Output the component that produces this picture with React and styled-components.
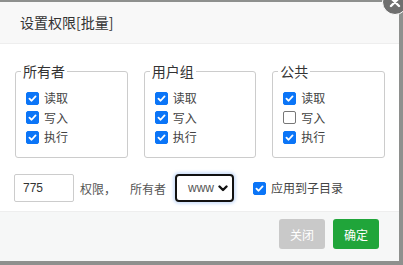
import React from 'react'
import styled, { createGlobalStyle } from 'styled-components'

const GlobalStyle = createGlobalStyle`
  html, body {
    margin: 0;
    padding: 0;
    background: #8e908e;
    font-family: "Noto Sans CJK SC", "Noto Sans", sans-serif;
    color: #333;
  }
`

const groups = [
  { title: '所有者', read: true, write: true, exec: true },
  { title: '用户组', read: true, write: true, exec: true },
  { title: '公共', read: true, write: false, exec: true },
]

const Check = ({ checked, children }) => (
  <CheckLabel>
    <Box $checked={checked}>
      {checked && (
        <svg width="9" height="9" viewBox="0 0 10 10">
          <path d="M1.6 5.2 L4 7.5 L8.4 2.6" fill="none" stroke="#fff" strokeWidth="2" strokeLinecap="round" strokeLinejoin="round" />
        </svg>
      )}
    </Box>
    {children}
  </CheckLabel>
)

const App = () => {
  return (
    <>
      <GlobalStyle />
      <Layer>
        <Header>设置权限[批量]</Header>
        <Body>
          <Groups>
            {groups.map((g) => (
              <Group key={g.title}>
                <Legend>{g.title}</Legend>
                <Check checked={g.read}>读取</Check>
                <Check checked={g.write}>写入</Check>
                <Check checked={g.exec}>执行</Check>
              </Group>
            ))}
          </Groups>
          <Row>
            <Input defaultValue="775" />
            <Text>权限，</Text>
            <Text $gap>所有者</Text>
            <Select>
              <span>www</span>
              <svg width="10" height="7" viewBox="0 0 10 7">
                <path d="M1.5 1.5 L5 5 L8.5 1.5" fill="none" stroke="#111" strokeWidth="2.4" strokeLinecap="round" strokeLinejoin="round" />
              </svg>
            </Select>
            <Check checked>应用到子目录</Check>
          </Row>
        </Body>
        <Footer>
          <Button $kind="close">关闭</Button>
          <Button $kind="ok">确定</Button>
        </Footer>
        <CloseIcon>
          <svg width="12" height="12" viewBox="0 0 12 12">
            <path d="M2 2 L10 10 M10 2 L2 10" stroke="#fff" strokeWidth="2.4" strokeLinecap="round" />
          </svg>
        </CloseIcon>
      </Layer>
    </>
  )
}

const Layer = styled.div`
  position: relative;
  margin-top: 2px;
  width: 399px;
  height: 259px;
  background: #fff;
  display: flex;
  flex-direction: column;
`

const Header = styled.div`
  height: 41px;
  line-height: 41px;
  padding-left: 20px;
  font-size: 14px;
  color: #333;
  background: #f8f8f8;
  border-bottom: 1px solid #eee;
`

const Body = styled.div`
  padding: 20px 14px 0 14px;
  height: 168px;
  flex-shrink: 0;
  box-sizing: border-box;
  border-bottom: 1px solid #eee;
`

const Groups = styled.div`
  display: flex;
  gap: 16px;
  padding-left: 1px;
`

const Group = styled.fieldset`
  margin: 0;
  width: 113px;
  height: 94px;
  box-sizing: border-box;
  border: 1px solid #ccc;
  border-radius: 3px;
  padding: 12px 0 0 10px;
  display: flex;
  flex-direction: column;
  gap: 3.5px;
`

const Legend = styled.legend`
  font-size: 14px;
  color: #333;
  padding: 0 2px;
  margin-left: -5px;
  line-height: 14px;
`

const CheckLabel = styled.label`
  display: flex;
  align-items: center;
  gap: 5px;
  font-size: 12px;
  line-height: 16px;
  color: #444;
`

const Box = styled.span`
  width: 13px;
  height: 13px;
  box-sizing: border-box;
  border-radius: 2px;
  display: flex;
  align-items: center;
  justify-content: center;
  background: ${(p) => (p.$checked ? '#0b75f7' : '#fff')};
  border: 1px solid ${(p) => (p.$checked ? '#0b75f7' : '#777')};
`

const Row = styled.div`
  display: flex;
  align-items: center;
  margin-top: 16px;
`

const Input = styled.input`
  width: 60px;
  height: 28px;
  box-sizing: border-box;
  border: 1px solid #ccc;
  border-radius: 2px;
  padding: 0 8px;
  font-family: "Liberation Sans", sans-serif;
  font-size: 12px;
  color: #333;
  outline: none;
`

const Text = styled.span`
  font-size: 12px;
  color: #555;
  margin-left: ${(p) => (p.$gap ? '14px' : '6px')};
`

const Select = styled.div`
  margin-left: 9px;
  margin-right: 19px;
  width: 59px;
  height: 28px;
  box-sizing: border-box;
  border: 2px solid #111;
  border-radius: 4px;
  box-shadow: 0 0 3px 2px rgba(120, 170, 240, 0.35);
  display: flex;
  align-items: center;
  justify-content: flex-end;
  gap: 4px;
  padding-right: 4px;
  font-family: "Liberation Sans", sans-serif;
  font-size: 12px;
  color: #555;
`

const Footer = styled.div`
  flex: 1;
  background: #f6f7f7;
  display: flex;
  justify-content: flex-end;
  align-items: flex-start;
  padding: 7px 20px 0 0;
  gap: 8px;
`

const Button = styled.button`
  width: 46px;
  height: 30px;
  border: none;
  border-radius: 3px;
  font-family: "Noto Sans CJK SC", sans-serif;
  font-size: 12px;
  color: #fff;
  background: ${(p) => (p.$kind === 'ok' ? '#20a53a' : '#c9c9c9')};
  padding: 0;
`

const CloseIcon = styled.div`
  position: absolute;
  top: -13px;
  right: -9px;
  width: 24px;
  height: 24px;
  border-radius: 50%;
  background: #6f6f6f;
  border: 1px solid #fff;
  display: flex;
  align-items: center;
  justify-content: center;
`

export default App
